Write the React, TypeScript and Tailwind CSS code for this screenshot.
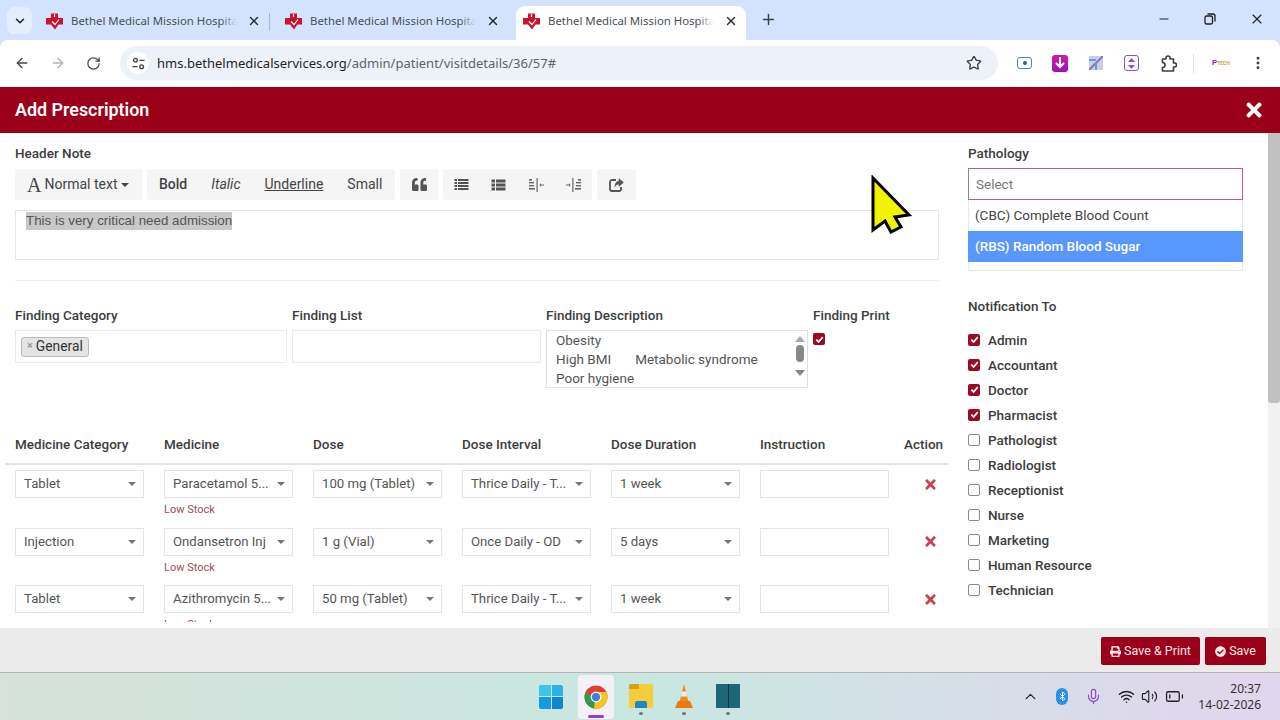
import { FaCheckCircle, FaPrint, FaQuoteLeft, FaTimes } from "react-icons/fa";
import { Bluetooth, ChevronDown, ChevronUp, Mic, Minus, Plus, RotateCw, ArrowLeft, ArrowRight, Star, Volume2, Wifi, X, EllipsisVertical, BatteryLow } from "lucide-react";

const roles = [
  { name: "Admin", on: true },
  { name: "Accountant", on: true },
  { name: "Doctor", on: true },
  { name: "Pharmacist", on: true },
  { name: "Pathologist", on: false },
  { name: "Radiologist", on: false },
  { name: "Receptionist", on: false },
  { name: "Nurse", on: false },
  { name: "Marketing", on: false },
  { name: "Human Resource", on: false },
  { name: "Technician", on: false },
];

const rows = [
  ["Tablet", "Paracetamol 5...", "100 mg (Tablet)", "Thrice Daily - T...", "1 week"],
  ["Injection", "Ondansetron Inj", "1 g (Vial)", "Once Daily - OD", "5 days"],
  ["Tablet", "Azithromycin 5...", "50 mg (Tablet)", "Thrice Daily - T...", "1 week"],
];

const heads = ["Medicine Category", "Medicine", "Dose", "Dose Interval", "Dose Duration", "Instruction"];

function Favicon() {
  return (
    <svg width="17" height="17" viewBox="0 0 17 17" className="shrink-0">
      <path d="M5 0.5h7v4.5h5v6.5h-4.5L9 16.5 5 11.5H0V5h5z" fill="#c8142e" />
      <path d="M6 8.5l3 3 4-5M8.5 1v3" fill="none" stroke="#fff" strokeWidth="1.2" />
    </svg>
  );
}

function Tab({ active }: { active?: boolean }) {
  return (
    <div className={`relative flex h-[34px] w-[230px] shrink-0 items-center pb-[4px] pl-[7px] pr-[7px] ${active ? "rounded-t-[9px] bg-white" : ""}`}>
      <Favicon />
      <div className="relative ml-[8px] w-[166px] overflow-hidden whitespace-nowrap text-[11.4px] text-[#4a4f55]" style={{ fontFamily: '"Noto Sans", sans-serif' }}>
        Bethel Medical Mission Hospita
        <div className={`absolute inset-y-0 right-0 w-[16px] bg-gradient-to-r from-transparent ${active ? "to-white" : "to-[#d3e3fd]"}`} />
      </div>
      <X size={14} strokeWidth={2.4} className="mb-[1px] ml-auto mr-[1px] text-[#25282c]" />
    </div>
  );
}

function Box({ checked }: { checked?: boolean }) {
  return checked ? (
    <span className="flex h-[12px] w-[12px] shrink-0 items-center justify-center rounded-[2px] bg-[#9b0a24]">
      <svg width="9" height="9" viewBox="0 0 10 10">
        <path d="M1.5 5.2 4 7.8 8.6 2.4" fill="none" stroke="#fff" strokeWidth="2" />
      </svg>
    </span>
  ) : (
    <span className="h-[12px] w-[12px] shrink-0 rounded-[2px] border border-[#8a8a8a] bg-white" />
  );
}

function Label({ text }: { text: string }) {
  return <div className="flex h-[20px] items-center whitespace-nowrap font-medium">{text}</div>;
}

function Select({ text }: { text: string }) {
  return (
    <div className="flex h-[28px] w-[129px] items-center border border-[#e4e4e4] bg-white pl-[8px] pr-[7px] text-[13.2px] text-[#555]">
      <span className="whitespace-nowrap">{text}</span>
      <span className="ml-auto h-0 w-0 border-x-[4px] border-t-[4px] border-x-transparent border-t-[#777]" />
    </div>
  );
}

function Lines({ kind }: { kind: "list" | "th" | "out" | "in" }) {
  if (kind === "out" || kind === "in") {
    const flip = kind === "in";
    return (
      <svg width="15" height="14" viewBox="0 0 15 14" fill="#666">
        <g transform={flip ? "translate(15 0) scale(-1 1)" : undefined}>
          <rect x="0" y="1" width="3" height="1.6" />
          <rect x="0" y="4" width="5" height="1.4" />
          <rect x="0" y="7" width="5" height="1.4" />
          <rect x="0" y="10" width="6" height="1.6" />
          <rect x="7.5" y="0" width="1.2" height="14" />
          <path d="M15 6.4h-3V5l-1.5 2 1.5 2V7.6h3z" />
        </g>
      </svg>
    );
  }
  const ys = kind === "list" ? [1, 4, 7, 10] : [1.5, 5.5, 9.5];
  const h = kind === "list" ? 2 : 3;
  return (
    <svg width="15" height="14" viewBox="0 0 15 14" fill="#555">
      {ys.map((y) => (
        <g key={y}>
          <rect x="0.5" y={y} width={kind === "list" ? 2.5 : 3.5} height={h} />
          <rect x={kind === "list" ? 4 : 5} y={y} width={kind === "list" ? 10.5 : 9.5} height={h} />
        </g>
      ))}
    </svg>
  );
}

export default function App() {
  return (
    <div className="relative flex h-[720px] w-[1280px] flex-col overflow-hidden bg-white" style={{ fontFamily: "Roboto, sans-serif" }}>
      {/* Tab strip */}
      <div className="flex h-[40px] shrink-0 items-end bg-[#d3e3fd]">
        <div className="mb-[5px] ml-[7px] mr-[7px] flex h-[28px] w-[25px] items-center justify-center rounded-[8px] bg-[#e4edfc]">
          <ChevronDown size={14} strokeWidth={2.6} className="text-[#1f2328]" />
        </div>
        <Tab />
        <div className="mb-[9px] mr-[8px] h-[18px] w-px bg-[#a9b9d0]" />
        <Tab />
        <div className="w-[8px]" />
        <Tab active />
        <Plus size={17} strokeWidth={2} className="mb-[12px] ml-[14px] text-[#3c4043]" />
        <div className="mb-[13px] ml-auto flex items-center gap-[33px] pr-[15px] text-[#1f1f1f]">
          <Minus size={14} strokeWidth={1.7} />
          <svg width="12" height="12" viewBox="0 0 12 12" fill="none" stroke="currentColor" strokeWidth="1.3">
            <rect x="1" y="3" width="7.5" height="8" rx="1.5" />
            <path d="M3.5 1h5.5A2 2 0 0 1 11 3v5.5" />
          </svg>
          <X size={16} strokeWidth={1.7} />
        </div>
      </div>

      {/* Address bar */}
      <div className="flex h-[47px] shrink-0 items-center rounded-t-[8px] bg-white pb-[1px] text-[#474747] shadow-[0_-6px_0_#d3e3fd]">
        <ArrowLeft size={16} strokeWidth={2} className="ml-[14px]" />
        <ArrowRight size={16} strokeWidth={2} className="ml-[20px] text-[#b3b3b3]" />
        <RotateCw size={15} strokeWidth={2} className="ml-[20px]" />
        <div className="ml-[19px] flex h-[34px] w-[878px] items-center rounded-full bg-[#edf2fa] pl-[7px] pr-[16px]">
          <div className="flex h-[22px] w-[22px] items-center justify-center rounded-full bg-white">
            <svg width="13" height="13" viewBox="0 0 13 13" fill="none" stroke="#3c4043" strokeWidth="1.3">
              <circle cx="3.4" cy="3.3" r="1.9" />
              <path d="M7.5 3.3h5M.5 9.7h5" />
              <circle cx="9.6" cy="9.7" r="1.9" />
            </svg>
          </div>
          <span className="ml-[8px] mt-[2px] whitespace-nowrap text-[13.03px] text-[#5f6368]" style={{ fontFamily: '"Noto Sans", sans-serif' }}>
            <span className="text-[#1f1f1f]">hms.bethelmedicalservices.org</span>/admin/patient/visitdetails/36/57#
          </span>
          <Star size={16} strokeWidth={2} className="ml-auto text-[#3c4043]" />
        </div>
        <div className="ml-[19px] flex h-[12px] w-[15px] items-center justify-center rounded-[3px] border-[1.5px] border-[#4a86c5]">
          <span className="h-[4px] w-[4px] rounded-full bg-[#3f51b5]" />
        </div>
        <div className="ml-[20px] flex h-[17px] w-[16px] items-center justify-center rounded-[3px] bg-gradient-to-b from-[#d01a9c] to-[#9c0fb5]">
          <svg width="10" height="12" viewBox="0 0 10 12" fill="none" stroke="#fff" strokeWidth="2">
            <path d="M5 0v10M1 6l4 4 4-4" />
          </svg>
        </div>
        <svg width="14" height="14" viewBox="0 0 14 14" className="ml-[21px]">
          <rect width="14" height="14" fill="#c9cdea" />
          <path d="M0 14 14 0" stroke="#8f6fc4" strokeWidth="2" />
          <path d="M0 4h7M7 14V7" stroke="#5aa6c9" strokeWidth="2" />
        </svg>
        <div className="ml-[21px] flex h-[16px] w-[15px] items-center justify-center rounded-[3px] border-[1.5px] border-[#8a4fd0]">
          <svg width="9" height="11" viewBox="0 0 9 11" fill="#8a4fd0">
            <path d="M4.5 0 8 4H1zM4.5 11 1 7h7z" />
          </svg>
        </div>
        <svg width="16" height="17" viewBox="0 0 16 17" fill="none" stroke="#3c4043" strokeWidth="1.6" strokeLinejoin="round" className="ml-[22px]">
          <path d="M1.5 4H5V3a2 2 0 0 1 4 0v1h3.5v4h1a2 2 0 0 1 0 4h-1v4h-11v-3.5a2 2 0 0 0 0-5z" />
        </svg>
        <div className="ml-[16px] h-[19px] w-px bg-[#dde1e6]" />
        <span className="ml-[18px] w-[19px] whitespace-nowrap text-[8px] font-bold leading-none text-[#9c27b0]">
          P<span className="text-[5px] text-[#d0a030]">TECH</span>
        </span>
        <EllipsisVertical size={16} strokeWidth={2.4} className="ml-[19px] text-[#3c4043]" />
      </div>

      {/* Modal header */}
      <div className="flex h-[46px] shrink-0 items-center justify-between bg-[#9b001a] pl-[15px] pr-[15px] text-white">
        <span className="text-[17.9px] font-semibold">Add Prescription</span>
        <FaTimes size={22} />
      </div>

      {/* Modal body */}
      <div className="flex min-h-0 flex-1">
        <div className="w-[958px] shrink-0 pl-[5px] text-[13.5px] text-[#3d3d3d]">
          <div className="pl-[10px] pr-[9px]">
            <div className="mt-[10px]">
              <Label text="Header Note" />
            </div>
            <div className="mt-[6px] flex h-[31px] items-stretch gap-[5px] text-[14px] text-[#444]">
              <div className="flex w-[127px] items-center rounded-[2px] bg-[#f5f5f5] pl-[12px]">
                <span className="text-[20px] leading-none" style={{ fontFamily: '"Liberation Serif", serif' }}>A</span>
                <span className="ml-[3px]">Normal text</span>
                <span className="ml-[4px] h-0 w-0 border-x-[4px] border-t-[4px] border-x-transparent border-t-[#444]" />
              </div>
              <div className="flex w-[248px] items-center rounded-[2px] bg-[#f5f5f5] pl-[12px]">
                <span className="font-medium">Bold</span>
                <span className="ml-[24px] italic">Italic</span>
                <span className="ml-[24px] underline">Underline</span>
                <span className="ml-[24px]">Small</span>
              </div>
              <div className="flex w-[38px] items-center justify-center rounded-[2px] bg-[#f5f5f5] text-[#555]">
                <FaQuoteLeft size={15} />
              </div>
              <div className="flex w-[149px] items-center justify-between rounded-[2px] bg-[#f5f5f5] px-[11px]">
                <Lines kind="list" />
                <Lines kind="th" />
                <Lines kind="out" />
                <Lines kind="in" />
              </div>
              <div className="flex w-[39px] items-center justify-center rounded-[2px] bg-[#f5f5f5]">
                <svg width="15" height="14" viewBox="0 0 15 14" fill="none" stroke="#555" strokeWidth="1.8">
                  <path d="M7 2H3A2 2 0 0 0 1 4v7a2 2 0 0 0 2 2h7a2 2 0 0 0 2-2V9" />
                  <path d="M10 0.5 14.5 4.5 10 8.5V6.2C7.6 6.2 6.5 7.2 5.8 8.8 5.8 5.5 7.4 3.2 10 3z" fill="#555" strokeWidth="0.4" />
                </svg>
              </div>
            </div>
            <div className="mt-[10px] h-[50px] w-[924px] border border-[#e6e6e6] pl-[10px] text-[13.35px] text-[#555]" style={{ fontFamily: '"Liberation Sans", sans-serif' }}>
              <span className="inline-block bg-[#c8c8c8] leading-[18px]">This is very critical need admission</span>
            </div>
            <div className="mt-[20px] h-px w-[924px] bg-[#eee]" />
            <div className="mt-[24px] flex">
              <div className="w-[272px]">
                <Label text="Finding Category" />
                <div className="mt-[5px] flex h-[33px] items-center border border-[#e9e9e9] pl-[5px]">
                  <span className="flex h-[20px] items-center rounded-[3px] border border-[#bbb] bg-[#e4e4e4] px-[5px] text-[13.8px] text-[#333]">
                    <span className="mr-[3px] text-[11px] font-bold text-[#999]">×</span>General
                  </span>
                </div>
              </div>
              <div className="ml-[5px] w-[249px]">
                <Label text="Finding List" />
                <div className="mt-[5px] h-[33px] border border-[#e9e9e9]" />
              </div>
              <div className="ml-[5px] w-[262px]">
                <Label text="Finding Description" />
                <div className="mt-[5px] flex h-[58px] border border-[#d9e2e8] text-[#555]">
                  <div className="flex-1 pl-[9px] leading-[19px]">
                    <div>Obesity</div>
                    <div className="whitespace-nowrap">High BMI<span className="ml-[24px]">Metabolic syndrome</span></div>
                    <div>Poor hygiene</div>
                  </div>
                  <div className="flex w-[15px] flex-col items-center pt-[5px]">
                    <span className="h-0 w-0 border-x-[5px] border-b-[6px] border-x-transparent border-b-[#aaa]" />
                    <span className="mt-[3px] h-[17px] w-[8px] rounded-full bg-[#888]" />
                    <span className="mt-[8px] h-0 w-0 border-x-[5px] border-t-[6px] border-x-transparent border-t-[#888]" />
                  </div>
                </div>
              </div>
              <div className="ml-[5px]">
                <Label text="Finding Print" />
                <div className="mt-[8px]">
                  <Box checked />
                </div>
              </div>
            </div>
          </div>

          {/* Medicine table */}
          <div className="mt-[44px] w-[943px]">
            <div className="flex h-[33px] items-center border-b-2 border-[#e2e2e2] pb-[7px] pl-[10px] font-medium">
              {heads.map((h) => (
                <div key={h} className="w-[149px] shrink-0">
                  {h}
                </div>
              ))}
              <div className="-ml-[5px] w-[40px] shrink-0">Action</div>
            </div>
            <div className="h-[157px] overflow-hidden pl-[10px] pt-[5px]">
              {rows.map((row) => (
                <div key={row[1]} className="flex h-[57.5px] items-start">
                  {row.map((cell, i) => (
                    <div key={i} className="w-[149px] shrink-0">
                      <Select text={cell} />
                      {i === 1 && <div className="mt-[5px] text-[11px] leading-[13px] text-[#a5485c]">Low Stock</div>}
                    </div>
                  ))}
                  <div className="h-[28px] w-[129px] shrink-0 border border-[#e4e4e4]" />
                  <div className="ml-[34px] flex h-[28px] items-center text-[#c9404f]">
                    <FaTimes size={15} />
                  </div>
                </div>
              ))}
            </div>
          </div>
        </div>

        {/* Right column */}
        <div className="relative w-[310px] shrink-0 pl-[10px] text-[13.5px] text-[#3d3d3d]">
          <div className="mt-[10px]">
            <Label text="Pathology" />
          </div>
          <div className="relative mt-[5px] h-[32px] w-[275px]">
            <div className="flex h-[32px] items-center border border-[#c9596b] border-l-[#888] pl-[7px] text-[#777]">Select</div>
            <div className="absolute inset-x-0 top-[32px] z-10 h-[71px] border-x border-b border-[#e3e9ef] bg-white">
              <div className="-mx-px flex h-[31px] items-center pl-[7px] text-[#444]">(CBC) Complete Blood Count</div>
              <div className="-mx-px flex h-[31px] items-center bg-[#5897fb] pl-[7px] font-medium text-white">(RBS) Random Blood Sugar</div>
            </div>
          </div>
          <div className="mt-[96px]">
            <Label text="Notification To" />
          </div>
          <div className="mt-[11px]">
            {roles.map((r) => (
              <div key={r.name} className="flex h-[25px] items-center">
                <Box checked={r.on} />
                <span className="ml-[8px] mt-[1px] font-medium">{r.name}</span>
              </div>
            ))}
          </div>
        </div>

        {/* Scrollbar */}
        <div className="ml-auto w-[12px] bg-[#f1f1f1]">
          <div className="h-[270px] rounded-b-[3px] bg-[#c1c1c1]" />
        </div>
      </div>

      {/* Modal footer */}
      <div className="flex h-[45px] shrink-0 items-center justify-end gap-[5px] border-b border-[#b5b5b5] bg-[#ebebeb] pr-[14px] pt-[2px] text-[12.5px] text-[#f7e9ea]">
        <div className="flex h-[28px] w-[99px] items-center justify-center gap-[3px] rounded-[2px] bg-[#9b001a]">
          <FaPrint size={11} />
          Save &amp; Print
        </div>
        <div className="flex h-[28px] w-[61px] items-center justify-center gap-[3px] rounded-[2px] bg-[#9b001a]">
          <FaCheckCircle size={11} />
          Save
        </div>
      </div>

      {/* Taskbar */}
      <div className="flex h-[47px] shrink-0 items-center bg-gradient-to-r from-[#d6e2da] via-[#c8e7e1] to-[#e2d5ee] pr-[19px] text-[#333]">
        <div className="ml-[539px] grid h-[24px] w-[24px] grid-cols-2 gap-[1px]">
          <span className="rounded-tl-[2px] bg-[#3cc4ee]" />
          <span className="rounded-tr-[2px] bg-[#2bb0ea]" />
          <span className="rounded-bl-[2px] bg-[#1a9ade]" />
          <span className="rounded-br-[2px] bg-[#0f85d0]" />
        </div>
        <div className="ml-[15px] flex h-[44px] w-[36px] flex-col items-center justify-end rounded-[4px] bg-[#f3f1f7]">
          <svg width="24" height="24" viewBox="0 0 24 24">
            <circle cx="12" cy="12" r="11.5" fill="#e0402f" />
            <path d="M12 12 1.6 7.5A11.5 11.5 0 0 0 10 23.4z" fill="#2e9e4b" />
            <path d="M12 7h10.2A11.5 11.5 0 0 1 10 23.4z" fill="#f7c51e" />
            <circle cx="12" cy="12" r="5.4" fill="#fff" />
            <circle cx="12" cy="12" r="4.2" fill="#3f7fe8" />
          </svg>
          <span className="mb-[1px] mt-[6px] h-[3px] w-[16px] rounded-full bg-[#9b3fc0]" />
        </div>
        <div className="ml-[9px] flex w-[36px] flex-col items-center pt-[6px]">
          <div className="relative h-[24px] w-[24px] rounded-[2px] bg-[#f5cd3c]">
            <span className="absolute left-0 top-0 h-[5px] w-[10px] rounded-tl-[2px] bg-[#d2a21e]" />
            <span className="absolute bottom-0 left-[6px] h-[7px] w-[12px] rounded-t-[2px] bg-[#2185c5]" />
          </div>
          <span className="mt-[4px] h-[3px] w-[4px] rounded-full bg-[#777]" />
        </div>
        <div className="ml-[7px] flex w-[36px] flex-col items-center pt-[6px]">
          <svg width="20" height="24" viewBox="0 0 20 24">
            <path d="M10 0 14.5 18h-9z" fill="#f08a1d" />
            <path d="M8 7.5h4l1 5H7z" fill="#f4efe6" />
            <path d="M1 24l3-7h12l3 7z" fill="#e87a12" />
          </svg>
          <span className="mt-[4px] h-[3px] w-[4px] rounded-full bg-[#777]" />
        </div>
        <div className="ml-[8px] flex w-[36px] flex-col items-center pt-[6px]">
          <div className="flex h-[24px] w-[24px] gap-px bg-[#11303a]">
            <span className="flex-1 bg-[#1c6878]" />
            <span className="flex-1 bg-[#1c6878]" />
          </div>
          <span className="mt-[4px] h-[3px] w-[4px] rounded-full bg-[#777]" />
        </div>
        <ChevronUp size={17} strokeWidth={1.8} className="ml-[276px] text-[#222]" />
        <div className="ml-[17px] flex h-[17px] w-[12px] items-center justify-center rounded-[6px] bg-[#2b8fe8] text-white">
          <Bluetooth size={11} strokeWidth={2} />
        </div>
        <Mic size={17} strokeWidth={1.7} className="ml-[17px] text-[#8a4fc0]" />
        <Wifi size={17} strokeWidth={2} className="ml-[16px] text-[#222]" />
        <Volume2 size={17} strokeWidth={1.6} className="ml-[6px] text-[#222]" />
        <BatteryLow size={19} strokeWidth={1.6} className="ml-[7px] text-[#222]" />
        <div className="ml-auto text-right text-[12px] leading-[16px] text-[#333]" style={{ fontFamily: '"Noto Sans", sans-serif' }}>
          <div>20:37</div>
          <div>14-02-2026</div>
        </div>
      </div>

      {/* Mouse pointer from the recording */}
      <svg width="44" height="62" viewBox="0 0 44 62" className="absolute left-[870px] top-[175px] z-20">
        <polygon points="3,3 39,40 25,42 31,52 21,57 15,46 3,55" fill="#f0f400" stroke="#000" strokeWidth="3" />
      </svg>
    </div>
  );
}
